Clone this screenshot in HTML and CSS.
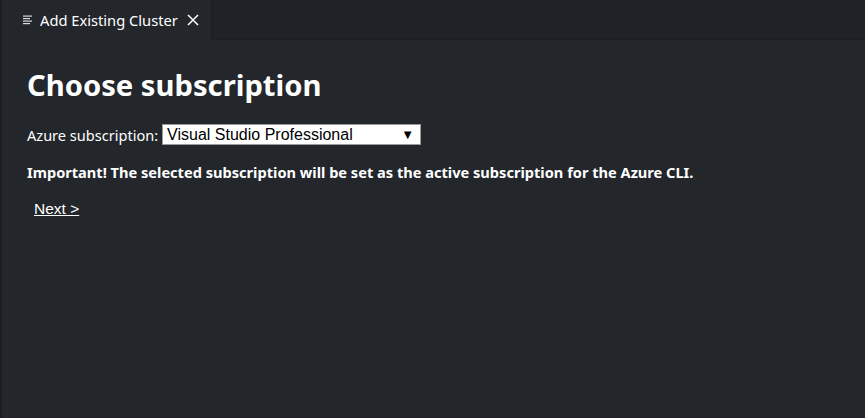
FILE: index.html
```html
<!DOCTYPE html>
<html>
<head>
<meta charset="utf-8">
<link rel="stylesheet" href="styles.css">
</head>
<body>
<div class="window">
  <div class="tabbar">
    <div class="tab">
      <svg class="tab-icon" width="12" height="12" viewBox="0 0 12 12">
        <rect x="1" y="1.5" width="9" height="1.2" fill="#d8d8d8"/>
        <rect x="1" y="4" width="7" height="1.2" fill="#d8d8d8"/>
        <rect x="1" y="6.5" width="9" height="1.2" fill="#d8d8d8"/>
        <rect x="1" y="9" width="7" height="1.2" fill="#d8d8d8"/>
      </svg>
      <span class="tab-title">Add Existing Cluster</span>
      <svg class="tab-close" width="14" height="14" viewBox="0 0 14 14">
        <path d="M2 2 L12 12 M12 2 L2 12" stroke="#ffffff" stroke-width="1.5"/>
      </svg>
    </div>
    <div class="tab-fill"></div>
  </div>
  <div class="content">
    <h1 class="title">Choose subscription</h1>
    <div class="field">
      <span class="label">Azure subscription:</span>
      <div class="select">
        <span>Visual Studio Professional</span>
        <span class="arrow">▼</span>
      </div>
    </div>
    <p class="warning">Important! The selected subscription will be set as the active subscription for the Azure CLI.</p>
    <a class="next" href="#">Next &gt;</a>
  </div>
</div>
</body>
</html>
```
FILE: styles.css
```css
html, body {
  margin: 0;
  padding: 0;
  height: 100%;
  background: #23272c;
}
.window {
  display: flex;
  flex-direction: column;
  height: 418px;
  border-left: 2px solid #1b1e22;
  box-sizing: border-box;
  font-family: "Noto Sans", "Open Sans", sans-serif;
  color: #ffffff;
}
.tabbar {
  display: flex;
  height: 40px;
  flex: none;
}
.tab {
  width: 210px;
  display: flex;
  align-items: center;
  padding-left: 20px;
  box-sizing: border-box;
  background: #23272c;
  border-right: 1px solid #1b1e22;
}
.tab-icon {
  margin-right: 6px;
}
.tab-title {
  font-size: 14.7px;
  color: #ffffff;
  margin-right: 8px;
}
.tab-fill {
  flex: 1;
  background: #1f2327;
  border-bottom: 1px solid #1b1e22;
}
.content {
  flex: 1;
  padding: 17px 25px 20px;
}
.title {
  margin: 8px 0 19px;
  font-size: 29.2px;
  font-weight: 700;
  line-height: 40px;
}
.field {
  display: flex;
  align-items: center;
  font-size: 14.55px;
}
.label {
  margin-right: 4px;
}
.select {
  width: 259px;
  height: 21px;
  box-sizing: border-box;
  background: #ffffff;
  border: 1px solid #9a9a9a;
  color: #000;
  font-family: "Liberation Sans", Arial, sans-serif;
  font-size: 16px;
  display: flex;
  align-items: center;
  justify-content: space-between;
  padding: 0 6px 0 4px;
}
.arrow {
  font-size: 13px;
}
.warning {
  margin: 17px 0 0;
  font-size: 14.6px;
  font-weight: 700;
  line-height: 20px;
}
.next {
  display: inline-block;
  margin: 18px 0 0 7px;
  font-family: "Liberation Sans", Arial, sans-serif;
  font-size: 15.5px;
  color: #ffffff;
}
```
